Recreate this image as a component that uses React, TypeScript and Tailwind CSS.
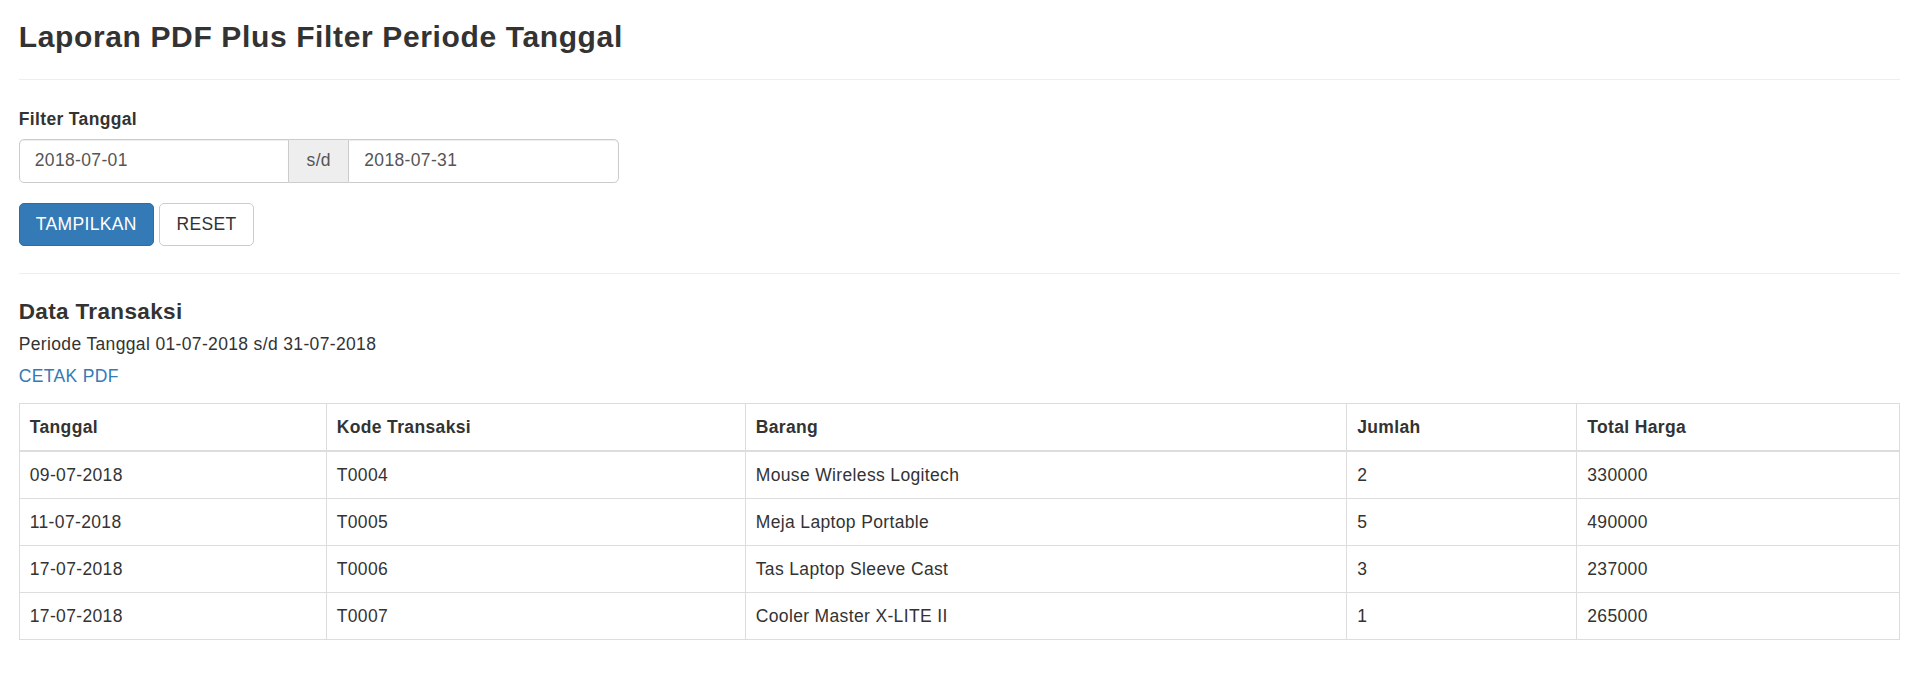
import React from "react";

const rows = [
  { tanggal: "09-07-2018", kode: "T0004", barang: "Mouse Wireless Logitech", jumlah: "2", total: "330000" },
  { tanggal: "11-07-2018", kode: "T0005", barang: "Meja Laptop Portable", jumlah: "5", total: "490000" },
  { tanggal: "17-07-2018", kode: "T0006", barang: "Tas Laptop Sleeve Cast", jumlah: "3", total: "237000" },
  { tanggal: "17-07-2018", kode: "T0007", barang: "Cooler Master X-LITE II", jumlah: "1", total: "265000" },
];

export default function App() {
  return (
    <div className="min-h-[698px] bg-white font-['Liberation_Sans',Arial,sans-serif] tracking-[0.35px] text-[17.5px] leading-[25px] text-[#333] px-[18.75px] pt-[20px]">
      <h3 className="text-[30px] leading-[33px] font-bold tracking-[0.63px]">Laporan PDF Plus Filter Periode Tanggal</h3>
      <div className="mt-[26px] border-t border-[#eee]" />

      <div className="mt-[27px] font-bold">Filter Tanggal</div>
      <div className="mt-[7px] flex w-[600px] h-[43.5px]">
        <div className="flex-1 flex items-center border border-[#ccc] rounded-l-[5px] px-[15px] text-[#555] shadow-[inset_0_1px_1px_rgba(0,0,0,0.075)]">
          2018-07-01
        </div>
        <div className="w-[59px] flex items-center justify-center bg-[#eee] border-y border-[#ccc] text-[#555]">s/d</div>
        <div className="flex-1 flex items-center border border-[#ccc] rounded-r-[5px] px-[15px] text-[#555] shadow-[inset_0_1px_1px_rgba(0,0,0,0.075)]">
          2018-07-31
        </div>
      </div>

      <div className="mt-[20.5px] flex gap-[5.5px]">
        <button className="h-[42.5px] w-[135px] bg-[#337ab7] border border-[#2e6da4] rounded-[5px] text-white">
          TAMPILKAN
        </button>
        <button className="h-[42.5px] w-[94.5px] bg-white border border-[#ccc] rounded-[5px] text-[#333]">
          RESET
        </button>
      </div>

      <div className="mt-[27.5px] border-t border-[#eee]" />

      <h4 className="mt-[25.5px] text-[22.5px] leading-[24.75px] font-bold">Data Transaksi</h4>
      <p className="mt-[8px]">Periode Tanggal 01-07-2018 s/d 31-07-2018</p>
      <a className="block mt-[6.7px] text-[#337ab7]">CETAK PDF</a>

      <table className="mt-[14.2px] w-full border-collapse border border-[#ddd]">
        <thead>
          <tr>
            <th className="w-[307px] text-left font-bold border border-[#ddd] border-b-[2.5px] px-[10px] py-[10.5px]">Tanggal</th>
            <th className="w-[419px] text-left font-bold border border-[#ddd] border-b-[2.5px] px-[10px] py-[10.5px]">Kode Transaksi</th>
            <th className="w-[601.5px] text-left font-bold border border-[#ddd] border-b-[2.5px] px-[10px] py-[10.5px]">Barang</th>
            <th className="w-[230px] text-left font-bold border border-[#ddd] border-b-[2.5px] px-[10px] py-[10.5px]">Jumlah</th>
            <th className="text-left font-bold border border-[#ddd] border-b-[2.5px] px-[10px] py-[10.5px]">Total Harga</th>
          </tr>
        </thead>
        <tbody>
          {rows.map((r) => (
            <tr key={r.kode}>
              <td className="border border-[#ddd] px-[10px] py-[10.5px]">{r.tanggal}</td>
              <td className="border border-[#ddd] px-[10px] py-[10.5px]">{r.kode}</td>
              <td className="border border-[#ddd] px-[10px] py-[10.5px]">{r.barang}</td>
              <td className="border border-[#ddd] px-[10px] py-[10.5px]">{r.jumlah}</td>
              <td className="border border-[#ddd] px-[10px] py-[10.5px]">{r.total}</td>
            </tr>
          ))}
        </tbody>
      </table>
    </div>
  );
}
